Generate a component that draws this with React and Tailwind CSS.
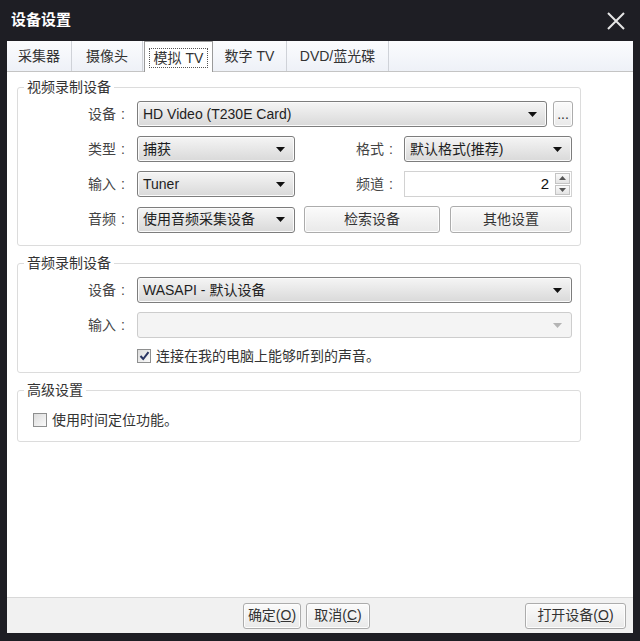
import React from "react";
import clsx from "clsx";

const Arrow = ({ disabled }) => (
  <svg width="9" height="5" viewBox="0 0 9 5">
    <path d="M0 0 H9 L4.5 5 Z" fill={disabled ? "#b4b4b4" : "#111"} />
  </svg>
);

// dropdown box, win7 style
const Select = ({ value, className, disabled }) => (
  <div
    className={clsx(
      "flex h-[26px] items-center justify-between rounded-[3px] border pl-[5px] pr-[9px] text-[14px]",
      disabled
        ? "border-[#cdcdcd] bg-[#f4f4f4]"
        : "border-[#7d7d7d] bg-linear-to-b from-[#f5f5f5] to-[#d9d9d9] shadow-[inset_0_0_0_1px_#fbfbfb]",
      className
    )}
  >
    <span className="text-[#1e1e1e]">{value}</span>
    <Arrow disabled={disabled} />
  </div>
);

const Button = ({ children, className }) => (
  <div
    className={clsx(
      "flex h-[26px] items-center justify-center rounded-[3px] border border-[#acacac] bg-linear-to-b from-[#fbfbfb] to-[#e9e9e9] text-[14px] text-[#333] shadow-[inset_0_0_0_1px_#fdfdfd]",
      className
    )}
  >
    {children}
  </div>
);

const Label = ({ children, className }) => (
  <div className={clsx("flex justify-end text-[14px] text-[#444]", className)}>
    <span>{children}</span>
    <span className="w-[14px] text-center">:</span>
  </div>
);

const Check = ({ checked }) => (
  <div className="flex h-[14px] w-[14px] items-center justify-center border border-[#8e8f8f] bg-linear-to-br from-[#dcdcdc] to-[#fafafa]">
    {checked && (
      <svg width="11" height="10" viewBox="0 0 11 10">
        <path d="M1.5 5 L4.2 8 L9.5 1.2" fill="none" stroke="#2a3563" strokeWidth="2" />
      </svg>
    )}
  </div>
);

const Group = ({ title, children, className }) => (
  <fieldset className={clsx("w-[564px] rounded-[3px] border border-[#dcdcdc]", className)}>
    <legend className="ml-[6px] px-[3px] text-[14px] leading-[18px] text-[#333]">{title}</legend>
    {children}
  </fieldset>
);

const tabs = [
  { name: "采集器", w: "w-[65px]" },
  { name: "摄像头", w: "w-[71px]" },
  { name: "模拟 TV", w: "w-[69px]", active: true },
  { name: "数字 TV", w: "w-[74px]" },
  { name: "DVD/蓝光碟", w: "w-[102px]" },
];

export default function App() {
  return (
    <div className="flex h-[641px] w-[640px] flex-col bg-[#1e1e24] font-['Liberation_Sans','Noto_Sans_CJK_SC',sans-serif]">
      {/* title bar */}
      <div className="flex h-[41px] items-center justify-between pl-[11px] pr-[15px]">
        <span className="text-[15px] font-bold text-white">设备设置</span>
        <svg width="18" height="18" viewBox="0 0 18 18">
          <path d="M1 1 L17 17 M17 1 L1 17" stroke="#e6e6e6" strokeWidth="2" />
        </svg>
      </div>

      <div className="mx-[7px] mb-[8px] flex flex-1 flex-col bg-white">
        {/* tabs */}
        <div className="flex h-[31px] border-b border-[#c4c4c4] bg-linear-to-b from-[#fbfcfe] to-[#eef1f7]">
          {tabs.map((t) =>
            t.active ? (
              <div
                key={t.name}
                className={clsx(
                  "-mb-px ml-[1px] flex items-center justify-center border border-b-0 border-[#9a9a9a] bg-white pt-[2px] text-[14px] text-[#333]",
                  t.w
                )}
              >
                <span className="border border-dotted border-[#555] px-[4px] leading-[18px]">{t.name}</span>
              </div>
            ) : (
              <div
                key={t.name}
                className={clsx(
                  "flex items-center justify-center border-r border-[#cfd2d8] text-[14px] text-[#333]",
                  t.w
                )}
              >
                {t.name}
              </div>
            )
          )}
        </div>

        {/* content */}
        <div className="flex flex-1 flex-col gap-[8px] pl-[10px] pt-[6px]">
          <Group title="视频录制设备" className="pb-[12px] pt-[5px]">
            <div className="flex flex-col gap-[9px]">
              <div className="flex items-center">
                <Label className="w-[112px]">设备</Label>
                <Select value="HD Video (T230E Card)" className="ml-[7px] w-[410px]" />
                <Button className="ml-[6px] w-[20px] text-[11px]">...</Button>
              </div>
              <div className="flex items-center">
                <Label className="w-[112px]">类型</Label>
                <Select value="捕获" className="ml-[7px] w-[158px]" />
                <Label className="w-[103px]">格式</Label>
                <Select value="默认格式(推荐)" className="ml-[6px] w-[168px]" />
              </div>
              <div className="flex items-center">
                <Label className="w-[112px]">输入</Label>
                <Select value="Tuner" className="ml-[7px] w-[158px]" />
                <Label className="w-[103px]">频道</Label>
                <div className="ml-[6px] flex h-[26px] w-[168px] items-center border border-[#d2d2d2] bg-white">
                  <span className="flex-1 pr-[5px] text-right text-[15px] text-[#111]">2</span>
                  <div className="flex h-full w-[17px] flex-col gap-px p-px">
                    <div className="flex flex-1 items-center justify-center border border-[#c4c4c4] bg-linear-to-b from-[#fafafa] to-[#e4e4e4]">
                      <svg width="7" height="4" viewBox="0 0 7 4"><path d="M0 4 H7 L3.5 0 Z" fill="#555" /></svg>
                    </div>
                    <div className="flex flex-1 items-center justify-center border border-[#c4c4c4] bg-linear-to-b from-[#fafafa] to-[#e4e4e4]">
                      <svg width="7" height="4" viewBox="0 0 7 4"><path d="M0 0 H7 L3.5 4 Z" fill="#555" /></svg>
                    </div>
                  </div>
                </div>
              </div>
              <div className="flex items-center">
                <Label className="w-[112px]">音频</Label>
                <Select value="使用音频采集设备" className="ml-[7px] w-[158px]" />
                <Button className="ml-[9px] h-[27px] w-[136px]">检索设备</Button>
                <Button className="ml-[10px] h-[27px] w-[122px]">其他设置</Button>
              </div>
            </div>
          </Group>

          <Group title="音频录制设备" className="pb-[7px] pt-[5px]">
            <div className="flex flex-col gap-[9px]">
              <div className="flex items-center">
                <Label className="w-[112px]">设备</Label>
                <Select value="WASAPI - 默认设备" className="ml-[7px] w-[435px] border-[#6a6a6a]" />
              </div>
              <div className="flex items-center">
                <Label className="w-[112px]">输入</Label>
                <Select value="" disabled className="ml-[7px] w-[435px]" />
              </div>
              <div className="ml-[119px] flex h-[18px] items-center gap-[5px]">
                <Check checked />
                <span className="text-[14px] text-[#333]">连接在我的电脑上能够听到的声音。</span>
              </div>
            </div>
          </Group>

          <Group title="高级设置" className="pb-[12px] pt-[12px]">
            <div className="ml-[15px] flex h-[18px] items-center gap-[5px]">
              <Check />
              <span className="text-[14px] text-[#333]">使用时间定位功能。</span>
            </div>
          </Group>
        </div>

        {/* bottom buttons */}
        <div className="flex h-[36px] items-center border-t border-[#d8d8d8] bg-[#f1f1f1] pl-[236px] pr-[7px]">
          <Button className="h-[25px] w-[58px] border-[#9a9a9a]">
            确定(<span className="underline">O</span>)
          </Button>
          <Button className="ml-[5px] h-[25px] w-[64px] border-[#9a9a9a]">
            取消(<span className="underline">C</span>)
          </Button>
          <Button className="ml-auto h-[25px] w-[101px] border-[#9a9a9a]">
            打开设备(<span className="underline">O</span>)
          </Button>
        </div>
      </div>
    </div>
  );
}
